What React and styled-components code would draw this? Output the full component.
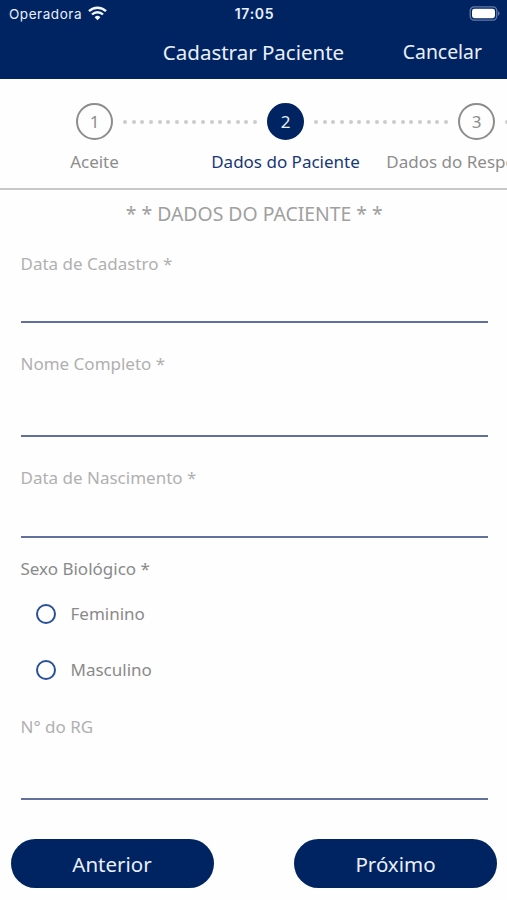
import React from 'react'
import styled, { createGlobalStyle } from 'styled-components'

const NAVY = '#002462'

const GlobalStyle = createGlobalStyle`
  * {
    box-sizing: border-box;
  }
  body {
    margin: 0;
    background: #fefefe;
    font-family: "Noto Sans", "Open Sans", sans-serif;
  }
`

const Screen = styled.div`
  width: 507px;
  height: 900px;
  display: flex;
  flex-direction: column;
  overflow: hidden;
`

const Header = styled.header`
  height: 79px;
  flex: none;
  background: ${NAVY};
  color: #eaf0fb;
`

const StatusBar = styled.div`
  height: 27px;
  display: grid;
  grid-template-columns: 1fr auto 1fr;
  align-items: center;
  padding: 0 7px 0 9px;
  font-family: Inter, "Liberation Sans", sans-serif;
  font-size: 13.5px;
`

const Carrier = styled.div`
  display: flex;
  align-items: center;
  gap: 6px;
  letter-spacing: 0.55px;
`

const Clock = styled.div`
  font-weight: 600;
  font-size: 14px;
  letter-spacing: 0.7px;
`

const Battery = styled.svg`
  justify-self: end;
`

const NavBar = styled.div`
  height: 50px;
  display: grid;
  grid-template-columns: 1fr auto 1fr;
  align-items: center;
  padding-right: 25px;
  padding-left: 25px;
`

const Title = styled.h1`
  grid-column: 2;
  margin: 0;
  font-size: 20.5px;
  font-weight: 400;
  line-height: 28px;
`

const Cancel = styled.button`
  justify-self: end;
  border: 0;
  padding: 0;
  background: none;
  color: inherit;
  font: inherit;
  font-size: 19.4px;
  line-height: 28px;
`

const Stepper = styled.nav`
  height: 111px;
  flex: none;
  padding-top: 24px;
  border-bottom: 2px solid #c9c9c9;
  overflow: hidden;
`

const Track = styled.div`
  display: flex;
  align-items: center;
  padding-left: 76px;
`

const Circle = styled.div`
  width: 37px;
  height: 37px;
  flex: none;
  display: flex;
  align-items: center;
  justify-content: center;
  border: 2px solid ${props => (props.$active ? NAVY : '#8d8d8d')};
  border-radius: 50%;
  background: ${props => (props.$active ? NAVY : 'transparent')};
  color: ${props => (props.$active ? '#eaf0fb' : '#8d8d8d')};
  font-size: 17px;
  line-height: 24px;
`

const Connector = styled.div`
  width: 154px;
  flex: none;
  display: flex;
  justify-content: center;
  gap: 4.7px;
`

const Dot = styled.span`
  width: 4px;
  height: 4px;
  border-radius: 50%;
  background: #cbcbcb;
`

const Labels = styled.div`
  display: grid;
  grid-template-columns: repeat(3, 191px);
  margin: 10px 0 0 -1px;
`

const Label = styled.div`
  display: flex;
  justify-content: center;
  white-space: nowrap;
  font-size: 17px;
  line-height: 24px;
  color: ${props => (props.$active ? '#183877' : '#8d8d8d')};
`

const Form = styled.form`
  flex: 1;
  padding: 11px 19px 0 20.5px;
`

const SectionTitle = styled.h2`
  margin: 0 0 27px;
  font-size: 19.4px;
  font-weight: 400;
  line-height: 26px;
  text-align: center;
  color: #a0a0a0;
`

const Field = styled.label`
  display: flex;
  flex-direction: column;
  height: ${props => props.$height}px;
  margin-bottom: ${props => props.$gap}px;
  font-size: 17px;
  line-height: 20px;
  color: #b0b0b0;
`

const Input = styled.input`
  flex: 1;
  min-height: 0;
  border: 0;
  border-bottom: 2px solid #62719c;
  padding: 0;
  background: transparent;
  font: inherit;
  outline: none;
`

const RadioGroup = styled.div`
  height: 158px;
  color: #8a8a8a;
  font-size: 17px;
  line-height: 20px;
`

const Radio = styled.div`
  display: flex;
  align-items: center;
  gap: 15px;
  height: 20px;
  margin-top: ${props => props.$gap}px;
  padding-left: 15px;
`

const RadioMark = styled.span`
  width: 20px;
  height: 20px;
  border: 2px solid #2a509b;
  border-radius: 50%;
`

const Footer = styled.footer`
  height: 61px;
  flex: none;
  display: flex;
  justify-content: space-between;
  align-items: flex-start;
  padding: 0 10px 0 10.5px;
`

const Button = styled.button`
  width: 203px;
  height: 49px;
  border: 0;
  border-radius: 25px;
  background: ${NAVY};
  color: #eaf0fb;
  font: inherit;
  font-size: 20.5px;
  line-height: 28px;
`

const steps = [
  { number: 1, label: 'Aceite' },
  { number: 2, label: 'Dados do Paciente', active: true },
  { number: 3, label: 'Dados do Responsável' },
]

const TextField = ({ label, height, gap }) => (
  <Field $height={height} $gap={gap}>
    {label}
    <Input type="text" />
  </Field>
)

const WifiIcon = () => (
  <svg width="19" height="15" viewBox="0 0 19 15" fill="none" stroke="#f4f7ff" strokeWidth="2.4">
    <path d="M1 5.2A12.2 12.2 0 0 1 18 5.2" />
    <path d="M4 8.5A8 8 0 0 1 15 8.5" />
    <path d="M9.5 14.2L6.6 11.2A4.2 4.2 0 0 1 12.4 11.2Z" fill="#f4f7ff" stroke="none" />
  </svg>
)

const BatteryIcon = () => (
  <Battery width="31" height="15" viewBox="0 0 31 15">
    <rect x="1.2" y="0.9" width="26.6" height="13.2" rx="4" fill="none" stroke="#637ba8" strokeWidth="1.3" />
    <rect x="3" y="2.8" width="23" height="9.4" rx="2.4" fill="#fff" />
    <path d="M29 5.3C31 6 31 9 29 9.7Z" fill="#637ba8" />
  </Battery>
)

export default function App() {
  return (
    <Screen>
      <GlobalStyle />
      <Header>
        <StatusBar>
          <Carrier>
            Operadora
            <WifiIcon />
          </Carrier>
          <Clock>17:05</Clock>
          <BatteryIcon />
        </StatusBar>
        <NavBar>
          <Title>Cadastrar Paciente</Title>
          <Cancel type="button">Cancelar</Cancel>
        </NavBar>
      </Header>

      <Stepper>
        <Track>
          {steps.map(step => (
            <React.Fragment key={step.number}>
              <Circle $active={step.active}>{step.number}</Circle>
              <Connector>
                {Array.from({ length: 16 }, (_, i) => <Dot key={i} />)}
              </Connector>
            </React.Fragment>
          ))}
        </Track>
        <Labels>
          {steps.map(step => (
            <Label key={step.number} $active={step.active}>{step.label}</Label>
          ))}
        </Labels>
      </Stepper>

      <Form>
        <SectionTitle>* * DADOS DO PACIENTE * *</SectionTitle>
        <TextField label="Data de Cadastro *" height={69} gap={31} />
        <TextField label="Nome Completo *" height={83} gap={31} />
        <TextField label="Data de Nascimento *" height={70} gap={21} />
        <RadioGroup>
          Sexo Biológico *
          <Radio $gap={25}>
            <RadioMark />
            Feminino
          </Radio>
          <Radio $gap={36}>
            <RadioMark />
            Masculino
          </Radio>
        </RadioGroup>
        <TextField label="N° do RG" height={83} gap={0} />
      </Form>

      <Footer>
        <Button type="button">Anterior</Button>
        <Button type="button">Próximo</Button>
      </Footer>
    </Screen>
  )
}
